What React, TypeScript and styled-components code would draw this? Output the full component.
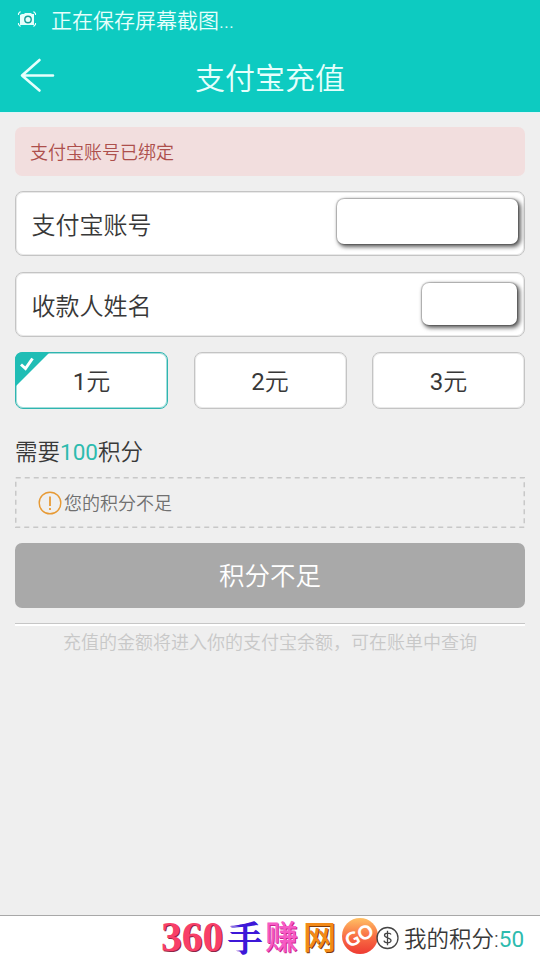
import React from "react";
import styled, { createGlobalStyle, css } from "styled-components";

const Global = createGlobalStyle`
  *, *::before, *::after { box-sizing: border-box; }
  body { margin: 0; background: #efefef; }
`;

const Screen = styled.div`
  display: flex;
  flex-direction: column;
  width: 540px;
  height: 960px;
  overflow: hidden;
  background: #efefef;
  color: #383838;
  font-family: Roboto, "Noto Sans CJK SC", sans-serif;
  font-weight: 350;
  white-space: nowrap;
`;

const Header = styled.header`
  height: 113px;
  flex: none;
  background: #0dcbc1;
  color: #e6fffc;
  border-bottom: 1px solid #dff4f6;
`;

const StatusBar = styled.div`
  display: flex;
  align-items: center;
  height: 40px;
  padding-left: 17px;
  gap: 14px;
  font-size: 21px;
  line-height: 40px;
`;

const StatusText = styled.span`
  padding-top: 2px;
`;

const StatusIcon = styled.svg`
  width: 20px;
  height: 18px;
  flex: none;
  margin-top: -2px;
`;

const TitleBar = styled.div`
  display: grid;
  grid-template-columns: 75px 1fr 75px;
  align-items: center;
  height: 72px;
`;

const BackIcon = styled.svg`
  width: 38px;
  height: 38px;
  margin-left: 18px;
`;

const Title = styled.h1`
  margin: 0;
  padding-top: 5px;
  font-size: 30px;
  line-height: 44px;
  font-weight: inherit;
  text-align: center;
`;

const Main = styled.main`
  flex: 1;
  display: flex;
  flex-direction: column;
  padding: 14px 15px 0;
`;

const Alert = styled.div`
  height: 48.5px;
  padding-left: 15px;
  border-radius: 7px;
  background: #f2dede;
  color: #ad4f4c;
  font-size: 18px;
  line-height: 52px;
`;

const Field = styled.div`
  display: flex;
  justify-content: space-between;
  height: 65.5px;
  margin-top: 15px;
  padding: 0 6px 0 15.5px;
  border: 1px solid #c4c4c4;
  border-radius: 8px;
  background: #fff;
  box-shadow: inset 0 0 0 1px #e9e9e9;
  font-size: 24px;
  line-height: 69px;

  & + & {
    margin-top: 15.5px;
  }
`;

const Mask = styled.div<{ $w: number; $h: number; $top: number; $right?: number }>`
  width: ${(p) => p.$w}px;
  height: ${(p) => p.$h}px;
  margin-top: ${(p) => p.$top}px;
  margin-right: ${(p) => p.$right ?? 0}px;
  border-radius: 7px;
  background: #fff;
  box-shadow: 0 0 1px 1px rgba(0, 0, 0, 0.2), 2px 2px 4px 1px rgba(0, 0, 0, 0.62);
`;

const Options = styled.div`
  display: grid;
  grid-template-columns: repeat(3, 1fr);
  gap: 25.5px;
  margin-top: 15px;
`;

const Option = styled.button<{ $selected?: boolean }>`
  position: relative;
  height: 57px;
  padding: 0;
  border: 1px solid #c4c4c4;
  border-radius: 8px;
  background: #fff;
  box-shadow: inset 0 0 0 1px #e9e9e9;
  color: inherit;
  font: inherit;
  font-size: 24px;
  line-height: 58px;
  ${(p) =>
    p.$selected &&
    css`
      border-color: #2fb5b0;
      box-shadow: inset 0 0 0 1px #a3dedb;
    `}
`;

const Digit = styled.span`
  font-weight: 400;
`;

const Corner = styled.svg`
  position: absolute;
  top: -1px;
  left: -1px;
  width: 36px;
  height: 36px;
`;

const Need = styled.p`
  margin: 26px 0 0;
  height: 32px;
  font-size: 22.5px;
  line-height: 34px;
`;

const Accent = styled.span`
  color: #2dbbae;
  font-weight: 400;
`;

const Notice = styled.div`
  height: 51px;
  margin-top: 10px;
`;

const NoticeFrame = styled.svg`
  display: block;
  width: 510px;
  height: 51px;
`;

const NoticeBody = styled.div`
  display: flex;
  align-items: center;
  gap: 2px;
  height: 51px;
  margin-top: -51px;
  padding-left: 23px;
  color: #707070;
  font-size: 18px;
`;

const NoticeText = styled.span`
  padding-bottom: 1px;
`;

const WarnIcon = styled.svg`
  width: 24px;
  height: 24px;
  margin-top: 1px;
`;

const Submit = styled.button`
  flex: none;
  height: 64.5px;
  margin-top: 15px;
  padding: 0;
  border: 0;
  border-radius: 7px;
  background: #a9a9a9;
  color: #fff;
  font: inherit;
  font-size: 25.5px;
  line-height: 66px;
`;

const Rule = styled.hr`
  width: 100%;
  height: 3px;
  margin: 15px 0 0;
  border: 0;
  border-top: 1.5px solid #c6c6c6;
  background: #fff;
`;

const Hint = styled.p`
  margin: 0;
  padding-top: 2px;
  color: #c8c8c8;
  font-size: 18px;
  line-height: 30px;
  text-align: center;
`;

const Footer = styled.footer`
  display: flex;
  flex: none;
  height: 45px;
  padding-left: 161px;
  border-top: 1.5px solid #a8a8a8;
  background: #fff;
`;

const Brand = styled.div`
  display: flex;
  width: 215px;
  height: 43px;
`;

const BrandDigits = styled.span`
  flex: none;
  width: 66px;
  color: #f83f68;
  font: bold 41.5px/43px "Liberation Serif", serif;
  text-shadow: 1px 1px 0 #8d2546;
`;

const BrandGlyph = styled.span<{ $w: number; $color: string; $edge: string; $weight: number; $serif?: boolean }>`
  flex: none;
  width: ${(p) => p.$w}px;
  color: ${(p) => p.$color};
  font-family: ${(p) => (p.$serif ? '"Noto Serif CJK SC", serif' : '"Noto Sans CJK SC", sans-serif')};
  font-size: ${(p) => (p.$serif ? 35 : 33)}px;
  font-weight: ${(p) => p.$weight};
  line-height: ${(p) => (p.$serif ? 41 : 38)}px;
  text-shadow: 1px 1px 0 ${(p) => p.$edge};
`;

const GoBadge = styled.svg`
  width: 38px;
  height: 38px;
  flex: none;
`;

const Points = styled.div`
  display: flex;
  align-items: center;
  height: 43px;
  font-size: 22.5px;
  line-height: 43px;
`;

const PointsText = styled.span`
  padding-top: 3px;
`;

const CoinIcon = styled.svg`
  width: 24px;
  height: 24px;
  margin: 1px 4px 0 0;
`;

export default function App() {
  return (
    <Screen>
      <Global />
      <Header>
        <StatusBar>
          <StatusIcon viewBox="0 0 20 18" fill="none" stroke="#e6fffc" strokeWidth="1.1">
            <path d="M1.500 5V3.500L3.500 1.500M16.500 1.500L18.500 3.500V5M1.500 13v1.500L3.500 16.500M16.500 16.500l2-2V13" />
            <path d="M3 5l2-1h2l1-1h6l1 1h2v11H3z" fill="#e6fffc" stroke="none" />
            <circle cx="11" cy="9.500" r="3.200" stroke="#159f98" strokeWidth="1.400" />
          </StatusIcon>
          <StatusText>正在保存屏幕截图...</StatusText>
        </StatusBar>
        <TitleBar>
          <BackIcon viewBox="0 0 38 38" fill="none" stroke="#e6fffc" strokeWidth="2.600" strokeLinecap="round" strokeLinejoin="round">
            <path d="M35 18.500H4M21.500 3L4 18.500l17.500 15" />
          </BackIcon>
          <Title>支付宝充值</Title>
        </TitleBar>
      </Header>
      <Main>
        <Alert>支付宝账号已绑定</Alert>
        <Field>
          <span>支付宝账号</span>
          <Mask $w={181} $h={45} $top={7} />
        </Field>
        <Field>
          <span>收款人姓名</span>
          <Mask $w={95} $h={42} $top={10} $right={1} />
        </Field>
        <Options>
          <Option $selected>
            <Corner viewBox="0 0 36 36">
              <path d="M0 8Q0 0 8 0H35L0 35z" fill="#20bdb5" />
              <path d="M6 12.500l4.500 4L17.500 6.500" fill="none" stroke="#fff" strokeWidth="3" />
            </Corner>
            <Digit>1</Digit>元
          </Option>
          <Option>
            <Digit>2</Digit>元
          </Option>
          <Option>
            <Digit>3</Digit>元
          </Option>
        </Options>
        <Need>
          需要<Accent>100</Accent>积分
        </Need>
        <Notice>
          <NoticeFrame viewBox="0 0 510 51">
            <rect x="0.750" y="0.750" width="508.500" height="49.500" fill="none" stroke="#c8c8c8" strokeWidth="1.500" strokeDasharray="5 4" />
          </NoticeFrame>
          <NoticeBody>
            <WarnIcon viewBox="0 0 24 24" fill="none" stroke="#e79a35" strokeWidth="1.400">
              <circle cx="12" cy="12" r="10.800" />
              <path d="M12 5.500v9.500M12 17v2" strokeWidth="1.800" />
            </WarnIcon>
            <NoticeText>您的积分不足</NoticeText>
          </NoticeBody>
        </Notice>
        <Submit>积分不足</Submit>
        <Rule />
        <Hint>充值的金额将进入你的支付宝余额，可在账单中查询</Hint>
      </Main>
      <Footer>
        <Brand>
          <BrandDigits>360</BrandDigits>
          <BrandGlyph $w={38} $weight={500} $serif $color="#3d18d8" $edge="#3d18d8">手</BrandGlyph>
          <BrandGlyph $w={38} $weight={500} $color="#f65bc5" $edge="#c9268f">赚</BrandGlyph>
          <BrandGlyph $w={38} $weight={500} $color="#f28a18" $edge="#7e3b0c">网</BrandGlyph>
          <GoBadge viewBox="0 0 38 38">
            <defs>
              <linearGradient id="goFill" x1="0" y1="0" x2="0" y2="1">
                <stop offset="0" stopColor="#ffc064" />
                <stop offset="0.5" stopColor="#f97145" />
                <stop offset="1" stopColor="#ee3b32" />
              </linearGradient>
            </defs>
            <circle cx="19" cy="20" r="18" fill="url(#goFill)" />
            <text x="18" y="26" textAnchor="middle" transform="rotate(-27 19 19)" fill="#fff" fontFamily="Lato" fontWeight="900" fontSize="19">GO</text>
          </GoBadge>
        </Brand>
        <Points>
          <CoinIcon viewBox="0 0 24 24" fill="none" stroke="#454545" strokeWidth="1.300">
            <circle cx="11.500" cy="12" r="10.500" />
            <path d="M15 8.500C14.500 6.800 8.500 6.200 8.500 9.300c0 3 6.500 2 6.500 5.200 0 3.300-6.500 3-7 .2M11.500 4.800v14.400" />
          </CoinIcon>
          <PointsText>
            我的积分:<Accent>50</Accent>
          </PointsText>
        </Points>
      </Footer>
    </Screen>
  );
}
